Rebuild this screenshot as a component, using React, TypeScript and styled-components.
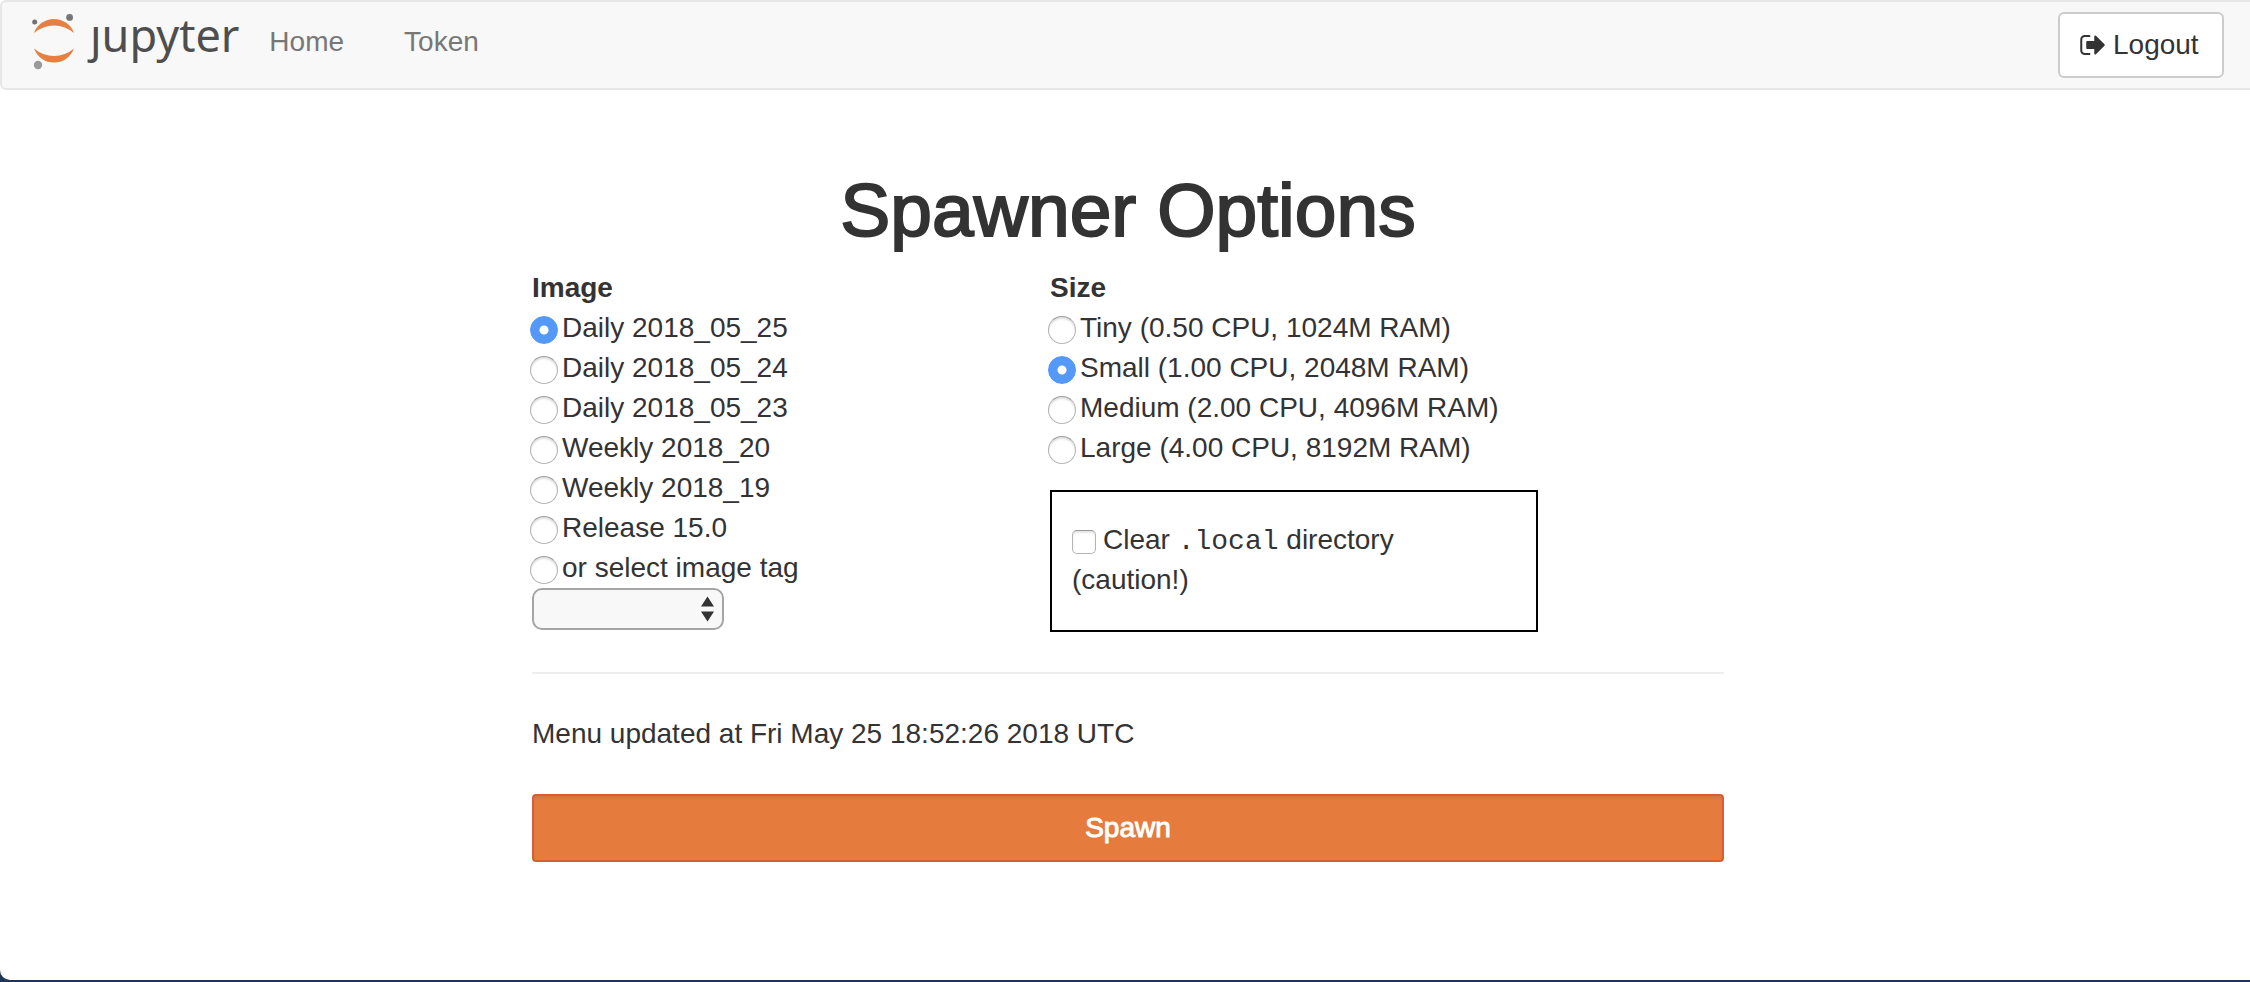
import React, { useState } from "react";
import styled, { createGlobalStyle } from "styled-components";

const GlobalStyle = createGlobalStyle`
  *, *::before, *::after { box-sizing: border-box; }
  body {
    margin: 0;
    background: #1d3557;
    color: #333;
    font-family: "Helvetica Neue", Helvetica, "Liberation Sans", Arial, sans-serif;
    font-size: 28px;
    line-height: 40px;
  }
`;

const Page = styled.div`
  min-height: calc(100vh - 2px);
  background: #fff;
  border-radius: 0 0 0 10px;
  overflow: hidden;
`;

const Navbar = styled.header`
  display: flex;
  align-items: flex-start;
  height: 90px;
  padding: 0 26px 0 28px;
  background: #f8f8f8;
  border: 2px solid #e7e7e7;
  border-right: 0;
  border-radius: 6px 0 0 6px;
`;

const Brand = styled.a`
  display: flex;
  align-items: flex-start;
  gap: 14px;
  padding-top: 8px;
  color: #4e4e4e;
  text-decoration: none;
`;

const Wordmark = styled.span`
  font-family: "Noto Sans", "Open Sans", sans-serif;
  font-size: 45px;
  line-height: 50px;
`;

const Nav = styled.nav`
  display: flex;
  flex: 1;
  padding: 20px 0 0;
`;

const NavLink = styled.a`
  padding: 0 30px;
  color: #777;
  text-decoration: none;
`;

const LogoutButton = styled.button`
  display: flex;
  align-items: center;
  gap: 8px;
  min-width: 166px;
  margin-top: 10px;
  padding: 11px 20px;
  border: 2px solid #ccc;
  border-radius: 6px;
  background: #fff;
  color: #333;
  font: inherit;
  cursor: pointer;
`;

const Main = styled.main`
  padding: 79px 0 40px 6px;
`;

const SpawnForm = styled.form`
  width: 100%;
  max-width: 1192px;
  margin: 0 auto;
`;

const Title = styled.h1`
  margin: 0 0 17px;
  font-size: 75px;
  font-weight: 400;
  line-height: 82px;
  text-align: center;
  -webkit-text-stroke: 2px #333;
`;

const Columns = styled.div`
  display: grid;
  grid-template-columns: 488px 488px;
  gap: 30px;
`;

const Group = styled.fieldset`
  min-width: 0;
  margin: 0;
  padding: 0;
  border: 0;
`;

const GroupTitle = styled.legend`
  padding: 0;
  font-weight: 700;
`;

const Option = styled.label`
  display: flex;
  align-items: center;
  gap: 4px;
  margin-left: -2px;
`;

const Radio = styled.input`
  appearance: none;
  width: 28px;
  height: 28px;
  margin: 4px 0 0;
  border: 1px solid #b4b4b4;
  border-top-color: #999;
  border-radius: 50%;
  background: #fff;
  box-shadow: inset 0 2px 2px #e2e2e2;

  &:checked {
    border-color: #5297f7;
    background: radial-gradient(circle, #fff 0 4px, #5599f8 5px);
    box-shadow: none;
  }
`;

const SelectBox = styled.div`
  position: relative;
  width: 192px;
`;

const TagSelect = styled.select`
  appearance: none;
  display: block;
  width: 100%;
  height: 42px;
  padding: 0 36px 0 12px;
  border: 2px solid #a5a5a5;
  border-radius: 10px;
  background: #f8f8f8;
  color: #333;
  font: inherit;
`;

const SelectArrows = styled.svg`
  position: absolute;
  top: 8px;
  right: 10px;
  pointer-events: none;
`;

const ClearBox = styled.div`
  margin-top: 22px;
  padding: 28px 20px 30px;
  border: 2px solid #000;
`;

const Checkbox = styled.input`
  appearance: none;
  width: 24px;
  height: 24px;
  margin: 0 7px 0 0;
  vertical-align: -5px;
  border: 1px solid #b4b4b4;
  border-top-color: #999;
  border-radius: 5px;
  background: #fff;
  box-shadow: inset 0 2px 2px #e6e6e6;

  &:checked {
    background: #5599f8;
  }
`;

const Mono = styled.code`
  font-family: "Liberation Mono", "Courier New", monospace;
  font-size: 28px;
  line-height: 28px;
`;

const Divider = styled.hr`
  height: 2px;
  margin: 40px 0;
  border: 0;
  background: #eee;
`;

const Updated = styled.p`
  margin: 0 0 40px;
`;

const SpawnButton = styled.button`
  display: block;
  width: 100%;
  padding: 12px 24px;
  border: 2px solid #d75d37;
  border-radius: 4px;
  background: #e57b3c;
  box-shadow: inset 0 2px 2px #d97538;
  color: #fff;
  font: inherit;
  -webkit-text-stroke: 1px #fff;
  cursor: pointer;
`;

const images = [
  "Daily 2018_05_25",
  "Daily 2018_05_24",
  "Daily 2018_05_23",
  "Weekly 2018_20",
  "Weekly 2018_19",
  "Release 15.0",
  "or select image tag",
];

const sizes = [
  "Tiny (0.50 CPU, 1024M RAM)",
  "Small (1.00 CPU, 2048M RAM)",
  "Medium (2.00 CPU, 4096M RAM)",
  "Large (4.00 CPU, 8192M RAM)",
];

function JupyterMark() {
  return (
    <svg width="46" height="60" viewBox="30 10 46 60" aria-hidden="true">
      <path d="M34 33A21.3 21.3 0 0 1 74 33A30.4 30.4 0 0 0 34 33Z" fill="#e67f3f" />
      <path d="M34 48.5A21.3 21.3 0 0 0 74 48.5A30.4 30.4 0 0 1 34 48.5Z" fill="#e67f3f" />
      <circle cx="34.7" cy="22" r="2.5" fill="#717171" />
      <circle cx="69.6" cy="17.4" r="3.4" fill="#767677" />
      <circle cx="38" cy="65" r="4.2" fill="#9a9a9a" />
    </svg>
  );
}

function SignOutIcon() {
  return (
    <svg width="25" height="28" viewBox="64 0 1568 1792" fill="currentColor" aria-hidden="true">
      <path d="M704 1440q0 4 1 20t.5 26.5-3 23.5-10 19.5-20.5 6.5h-320q-119 0-203.5-84.5t-84.5-203.5v-704q0-119 84.5-203.5t203.5-84.5h320q13 0 22.5 9.5t9.5 22.5q0 4 1 20t.5 26.5-3 23.5-10 19.5-20.5 6.5h-320q-66 0-113 47t-47 113v704q0 66 47 113t113 47h312l11.5 1 11.5 3 8 5.5 7 9 2 13.5zm928-544q0 26-19 45l-544 544q-19 19-45 19t-45-19-19-45v-288h-448q-26 0-45-19t-19-45v-384q0-26 19-45t45-19h448v-288q0-26 19-45t45-19 45 19l544 544q19 19 19 45z" />
    </svg>
  );
}

interface RadioListProps {
  title: string;
  name: string;
  options: string[];
  initial: string;
}

function RadioList({ title, name, options, initial }: RadioListProps) {
  const [value, setValue] = useState(initial);
  return (
    <Group>
      <GroupTitle>{title}</GroupTitle>
      {options.map((option) => (
        <Option key={option}>
          <Radio
            type="radio"
            name={name}
            value={option}
            checked={value === option}
            onChange={() => setValue(option)}
          />
          {option}
        </Option>
      ))}
    </Group>
  );
}

export default function App() {
  return (
    <>
      <GlobalStyle />
      <Page>
        <Navbar>
          <Brand href="#" aria-label="Jupyter">
            <JupyterMark />
            <Wordmark>ȷupyter</Wordmark>
          </Brand>
          <Nav>
            <NavLink href="#home">Home</NavLink>
            <NavLink href="#token">Token</NavLink>
          </Nav>
          <LogoutButton type="button">
            <SignOutIcon />
            Logout
          </LogoutButton>
        </Navbar>
        <Main>
          <SpawnForm onSubmit={(event) => event.preventDefault()}>
            <Title>Spawner Options</Title>
            <Columns>
              <div>
                <RadioList title="Image" name="image" options={images} initial={images[0]} />
                <SelectBox>
                  <TagSelect aria-label="Image tag" defaultValue="">
                    <option value="" />
                  </TagSelect>
                  <SelectArrows width="13" height="26" viewBox="0 0 13 26" aria-hidden="true">
                    <path d="M6.5 0.5L13 10.5H0Z M0 15.5H13L6.5 25.5Z" fill="#333" />
                  </SelectArrows>
                </SelectBox>
              </div>
              <div>
                <RadioList title="Size" name="size" options={sizes} initial={sizes[1]} />
                <ClearBox>
                  <label>
                    <Checkbox type="checkbox" name="clear" />
                    Clear <Mono>.local</Mono> directory
                    <br />
                    (caution!)
                  </label>
                </ClearBox>
              </div>
            </Columns>
            <Divider />
            <Updated>Menu updated at Fri May 25 18:52:26 2018 UTC</Updated>
            <SpawnButton type="submit">Spawn</SpawnButton>
          </SpawnForm>
        </Main>
      </Page>
    </>
  );
}
